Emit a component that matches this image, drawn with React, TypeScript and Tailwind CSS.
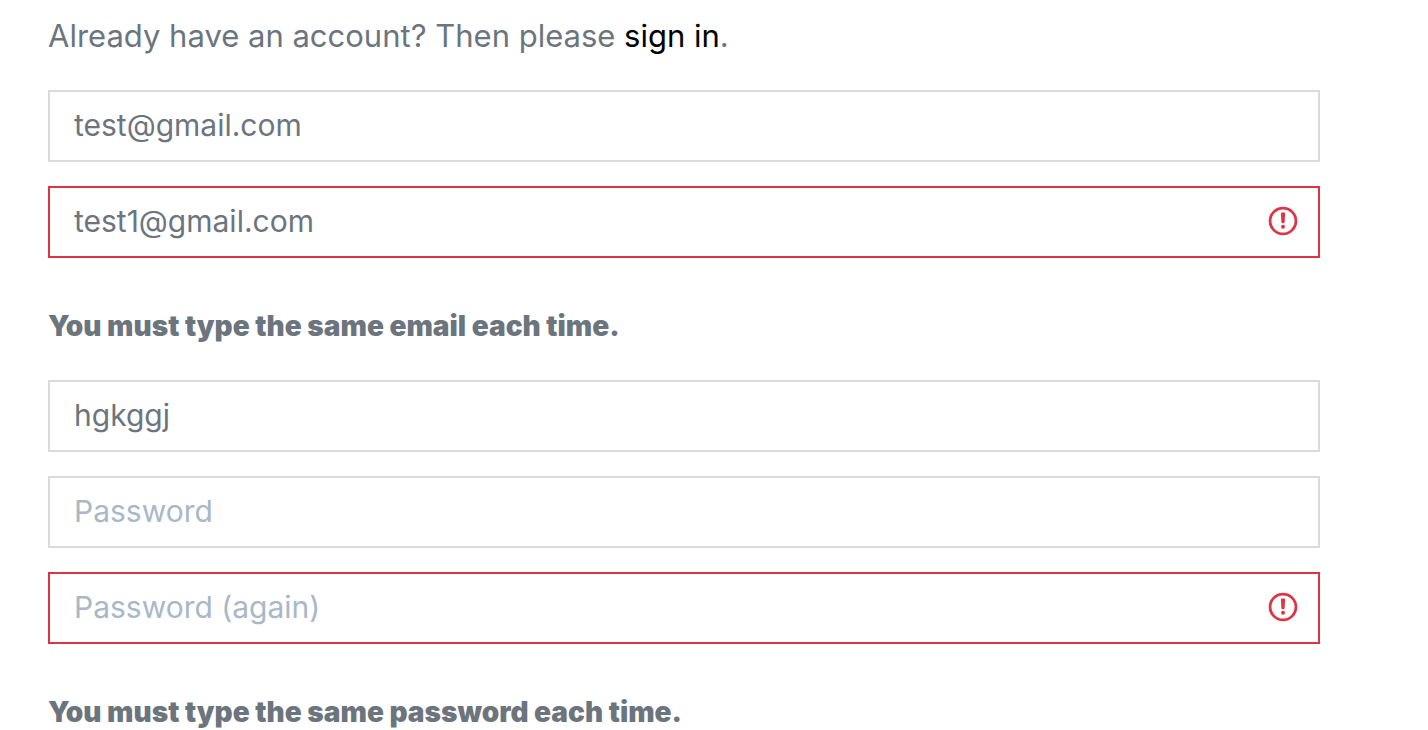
import { useState } from "react";

type FieldProps = {
  label: string;
  name: string;
  type?: string;
  initial?: string;
  invalid?: boolean;
  describedBy?: string;
};

function InvalidIcon() {
  return (
    <svg
      viewBox="0 0 30 30"
      className="pointer-events-none absolute top-5 right-[22px] h-[30px] w-[30px]"
      fill="none"
      aria-hidden="true"
    >
      <circle cx="15" cy="15" r="12.9" stroke="#dc3545" strokeWidth="2.8" />
      <path
        d="M12.9 7.6Q12.8 6.5 13.9 6.5H16.1Q17.2 6.5 17.1 7.6L16.6 16.2Q16.5 17.2 15.6 17.2H14.4Q13.5 17.2 13.4 16.2Z"
        fill="#dc3545"
      />
      <circle cx="15" cy="20.8" r="2" fill="#dc3545" />
    </svg>
  );
}

function Field({ label, name, type = "text", initial = "", invalid = false, describedBy }: FieldProps) {
  const [value, setValue] = useState(initial);
  return (
    <div className="relative">
      <input
        id={name}
        name={name}
        type={type}
        aria-label={label}
        aria-invalid={invalid}
        aria-describedby={describedBy}
        placeholder={label}
        value={value}
        onChange={(e) => setValue(e.target.value)}
        className={
          "block h-[72px] w-full border-2 bg-white pr-16 pb-0.5 pl-6 text-[30px] text-[#6c757d] outline-none placeholder:text-[#a9b8c6] placeholder:opacity-100 " +
          (invalid ? "border-[#dc3545]" : "border-[#dadada]")
        }
      />
      {invalid && <InvalidIcon />}
    </div>
  );
}

export default function App() {
  return (
    <main className="bg-white pt-3 pr-[108px] pl-12 font-['Inter',sans-serif] text-[#6c757d]">
      <p className="mb-[30px] text-[31px] leading-[48px]">
        Already have an account? Then please{" "}
        <a href="#signin" className="text-black">
          sign in
        </a>
        .
      </p>
      <form>
        <div className="flex flex-col gap-6">
          <Field label="Email" name="email" type="email" initial="test@gmail.com" />
          <Field
            label="Email (again)"
            name="email2"
            type="email"
            initial="test1@gmail.com"
            invalid
            describedBy="email-error"
          />
        </div>
        <p id="email-error" className="mt-[52px] mb-[38px] text-[28px] leading-8 font-black">
          You must type the same email each time.
        </p>
        <div className="flex flex-col gap-6">
          <Field label="Username" name="username" initial="hgkggj" />
          <Field label="Password" name="password" type="password" />
          <Field
            label="Password (again)"
            name="password2"
            type="password"
            invalid
            describedBy="password-error"
          />
        </div>
        <p id="password-error" className="mt-[52px] text-[28px] leading-8 font-black">
          You must type the same password each time.
        </p>
      </form>
    </main>
  );
}
